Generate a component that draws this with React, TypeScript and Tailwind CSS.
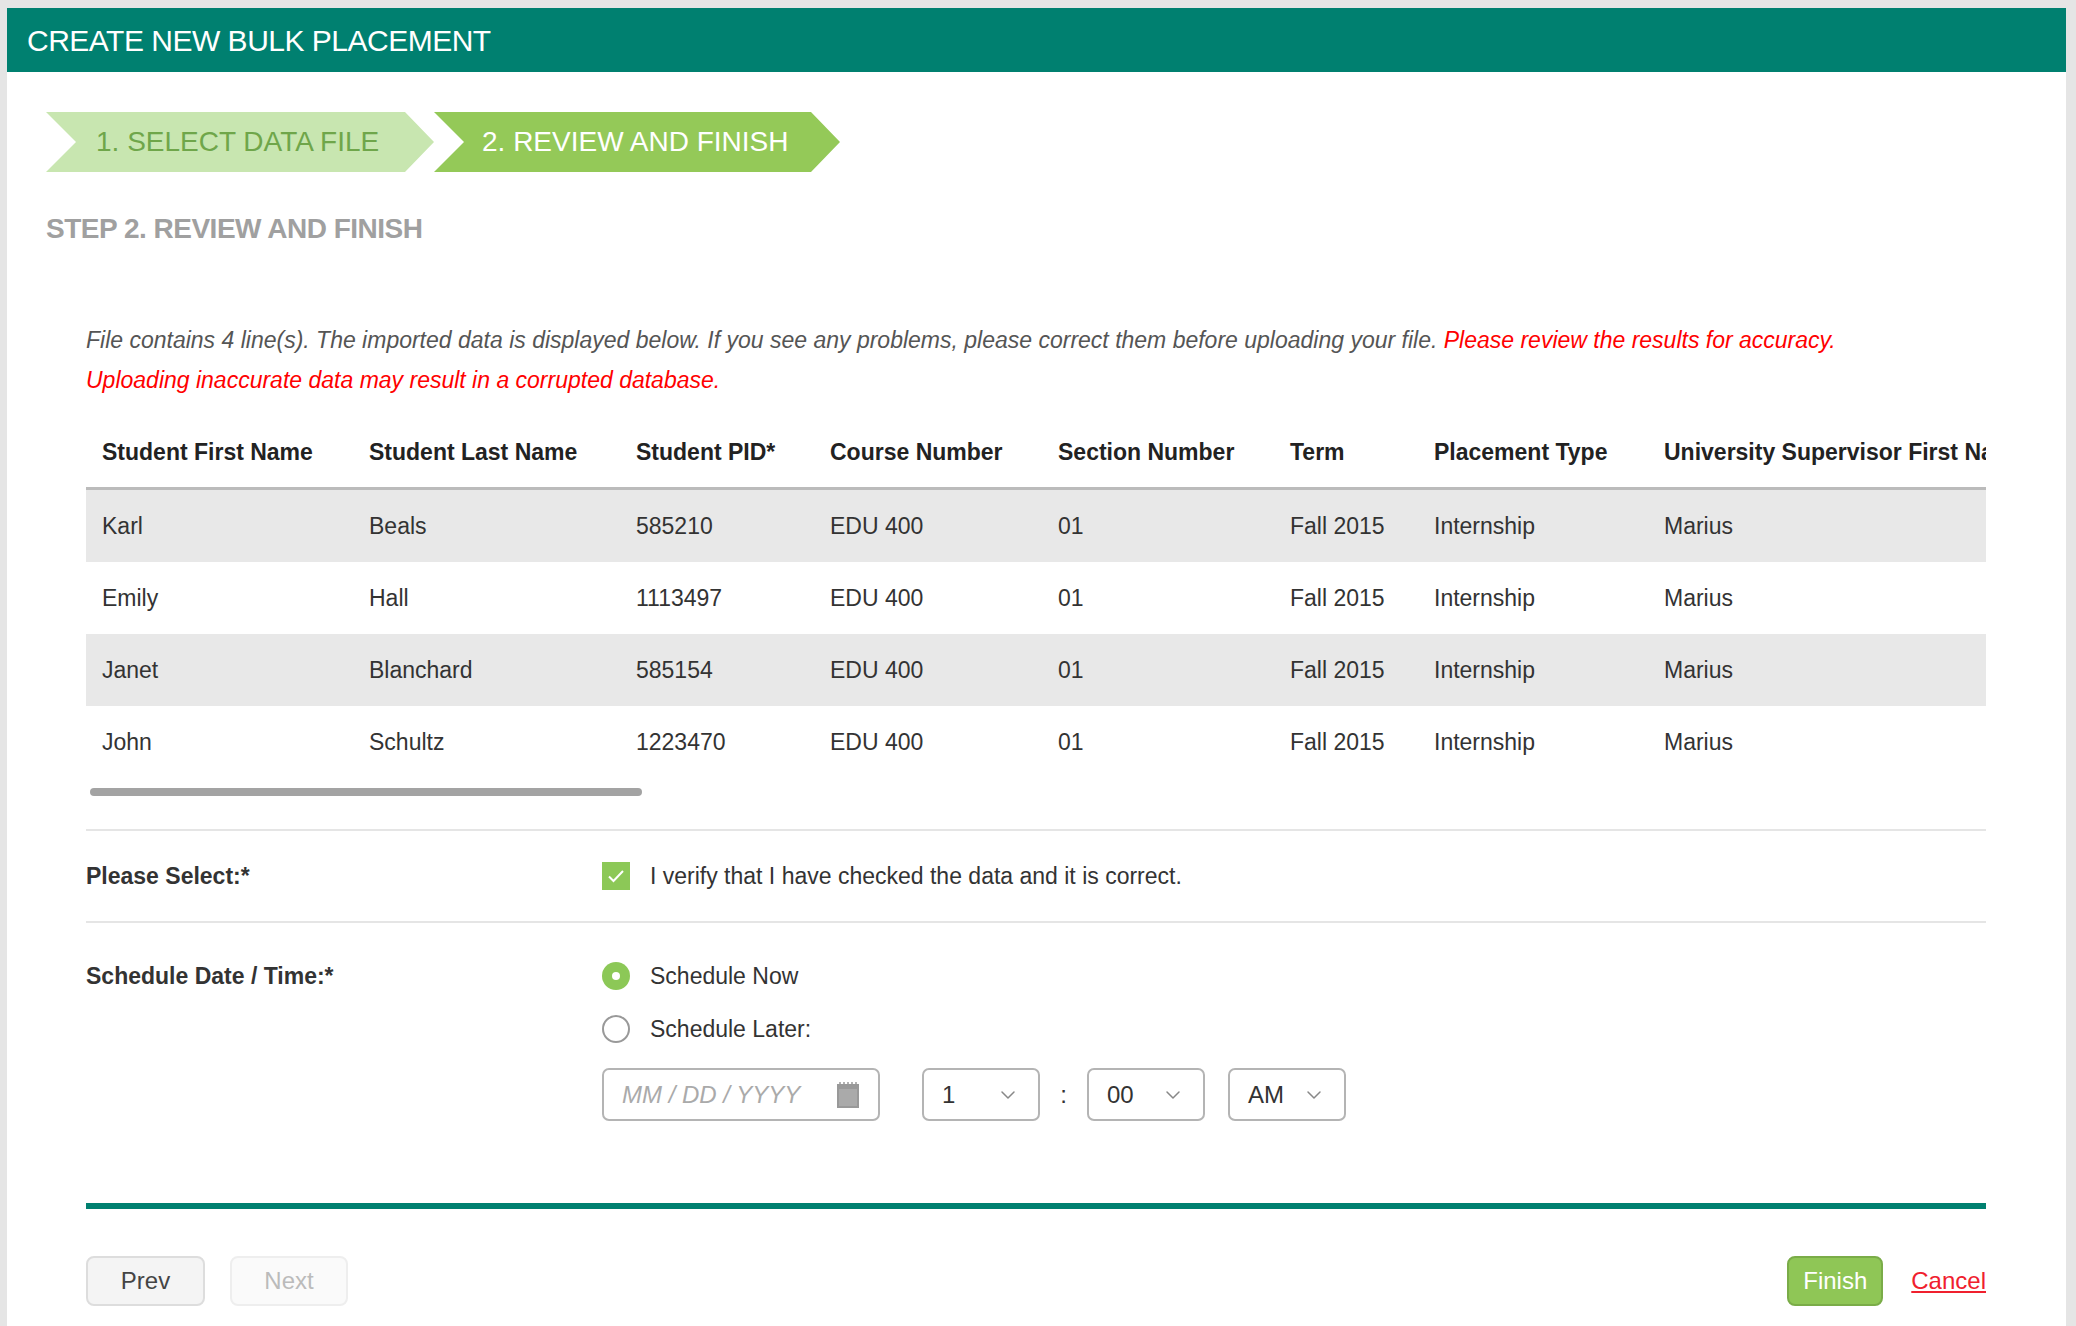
import { ChevronDown } from "lucide-react";

const COLS = [
  { label: "Student First Name", w: "w-[267px]" },
  { label: "Student Last Name", w: "w-[267px]" },
  { label: "Student PID*", w: "w-[194px]" },
  { label: "Course Number", w: "w-[228px]" },
  { label: "Section Number", w: "w-[232px]" },
  { label: "Term", w: "w-[144px]" },
  { label: "Placement Type", w: "w-[230px]" },
  { label: "University Supervisor First Name", w: "w-[400px]" },
];

const ROWS = [
  ["Karl", "Beals", "585210"],
  ["Emily", "Hall", "1113497"],
  ["Janet", "Blanchard", "585154"],
  ["John", "Schultz", "1223470"],
];

function Select({ value, w }: { value: string; w: string }) {
  return (
    <div className={`flex h-[53px] ${w} items-center justify-between rounded-[7px] border-2 border-[#b4b4b4] px-[18px] text-[24px] text-[#333]`}>
      <span>{value}</span>
      <ChevronDown className="size-6 text-[#888]" strokeWidth={1.5} />
    </div>
  );
}

export default function App() {
  return (
    <div className="min-h-[1326px] bg-[#e5e5e5] pt-[8px] pl-[7px] pr-[10px] [font-family:Liberation_Sans,Arial,sans-serif]">
      <div className="min-h-[1318px] bg-white">
        <div className="flex h-[64px] items-center bg-[#008070] px-[20px] text-[30px] tracking-[-0.5px] text-white">
          CREATE NEW BULK PLACEMENT
        </div>
        <div className="flex pl-[39px] pt-[40px]">
          <div className="flex h-[60px] w-[388px] items-center bg-[#c8e6b0] pl-[50px] text-[28px] text-[#6fa64a] [clip-path:polygon(0_0,calc(100%_-_29px)_0,100%_50%,calc(100%_-_29px)_100%,0_100%,30px_50%)]">
            1. SELECT DATA FILE
          </div>
          <div className="flex h-[60px] w-[406px] items-center bg-[#94c958] pl-[48px] text-[28px] text-white [clip-path:polygon(0_0,calc(100%_-_29px)_0,100%_50%,calc(100%_-_29px)_100%,0_100%,30px_50%)]">
            2. REVIEW AND FINISH
          </div>
        </div>
        <div className="pl-[39px] pt-[36px] text-[28px] font-bold tracking-[-0.5px] text-[#a0a0a0]">
          STEP 2. REVIEW AND FINISH
        </div>
        <div className="mx-[79px] w-[1900px]">
          <p className="mt-[70px] text-[23px] leading-[40px] italic text-[#555]">
            File contains 4 line(s). The imported data is displayed below. If you see any problems, please correct them before uploading your file.{" "}
            <span className="text-[#f00]">Please review the results for accuracy.<br />Uploading inaccurate data may result in a corrupted database.</span>
          </p>
          <div className="mt-[18px] overflow-hidden">
            <div className="flex h-[72px] w-max items-center border-b-[3px] border-[#bbb] text-[23px] font-bold text-[#222]">
              {COLS.map((c) => (
                <div key={c.label} className={`${c.w} shrink-0 whitespace-nowrap pl-[16px]`}>{c.label}</div>
              ))}
            </div>
            {ROWS.map((r, i) => (
              <div key={r[0]} className={`flex h-[72px] w-max items-center text-[23px] text-[#333] ${i % 2 === 0 ? "bg-[#e8e8e8]" : "bg-white"}`}>
                {[...r, "EDU 400", "01", "Fall 2015", "Internship", "Marius"].map((v, j) => (
                  <div key={j} className={`${COLS[j].w} shrink-0 pl-[16px]`}>{v}</div>
                ))}
              </div>
            ))}
          </div>
          <div className="mt-[10px] ml-[4px] h-[8px] w-[552px] rounded-full bg-[#a3a3a3]" />
          <div className="mt-[33px] border-t-2 border-[#e5e5e5]" />
          <div className="flex h-[92px] items-center border-b-2 border-[#e5e5e5]">
            <div className="w-[516px] text-[23px] font-bold text-[#333]">Please Select:*</div>
            <div className="flex h-[28px] w-[28px] items-center justify-center bg-[#8cc857]">
              <svg viewBox="0 0 20 20" className="size-5" fill="none" stroke="white" strokeWidth={2}>
                <path d="M3 10.5l4.5 4.5L17 5" />
              </svg>
            </div>
            <div className="ml-[20px] text-[23px] text-[#333]">I verify that I have checked the data and it is correct.</div>
          </div>
          <div className="flex pt-[36px]">
            <div className="w-[516px] text-[23px] font-bold text-[#333]">Schedule Date / Time:*</div>
            <div className="flex flex-col">
              <div className="flex items-center gap-[20px] text-[23px] text-[#333]">
                <div className="flex h-[28px] w-[28px] items-center justify-center rounded-full bg-[#8cc857]">
                  <div className="h-[8px] w-[8px] rounded-full bg-white" />
                </div>
                Schedule Now
              </div>
              <div className="mt-[18px] flex items-center gap-[20px] text-[23px] text-[#333]">
                <div className="h-[28px] w-[28px] rounded-full border-2 border-[#999]" />
                Schedule Later:
              </div>
              <div className="mt-[22px] flex items-center">
                <div className="flex h-[53px] w-[278px] items-center justify-between rounded-[7px] border-2 border-[#b4b4b4] px-[18px] text-[24px] italic text-[#aaa]">
                  MM / DD / YYYY
                  <svg viewBox="0 0 24 28" className="h-[28px] w-[24px]">
                    <rect x="1" y="3" width="22" height="24" fill="#999" />
                    <rect x="3" y="8" width="18" height="17" fill="#aaa" />
                    <path d="M4 1v4M8 1v4M12 1v4M16 1v4M20 1v4" stroke="#999" strokeWidth="1.5" />
                  </svg>
                </div>
                <div className="ml-[42px]"><Select value="1" w="w-[118px]" /></div>
                <div className="w-[47px] text-center text-[24px] text-[#333]">:</div>
                <Select value="00" w="w-[118px]" />
                <div className="ml-[23px]"><Select value="AM" w="w-[118px]" /></div>
              </div>
            </div>
          </div>
          <div className="mt-[82px] h-[6px] bg-[#008070]" />
          <div className="mt-[47px] flex items-center">
            <button className="h-[50px] w-[119px] rounded-[8px] border-2 border-[#ddd] bg-[#f4f4f4] text-[24px] text-[#444]">Prev</button>
            <button className="ml-[25px] h-[50px] w-[118px] rounded-[8px] border-2 border-[#eee] bg-[#fafafa] text-[24px] text-[#bbb]">Next</button>
            <button className="ml-auto h-[50px] w-[96px] rounded-[8px] border-2 border-[#7aac48] bg-[#8fc656] text-[24px] text-white">Finish</button>
            <a className="ml-[28px] text-[24px] text-[#f0202e] underline">Cancel</a>
          </div>
        </div>
      </div>
    </div>
  );
}
